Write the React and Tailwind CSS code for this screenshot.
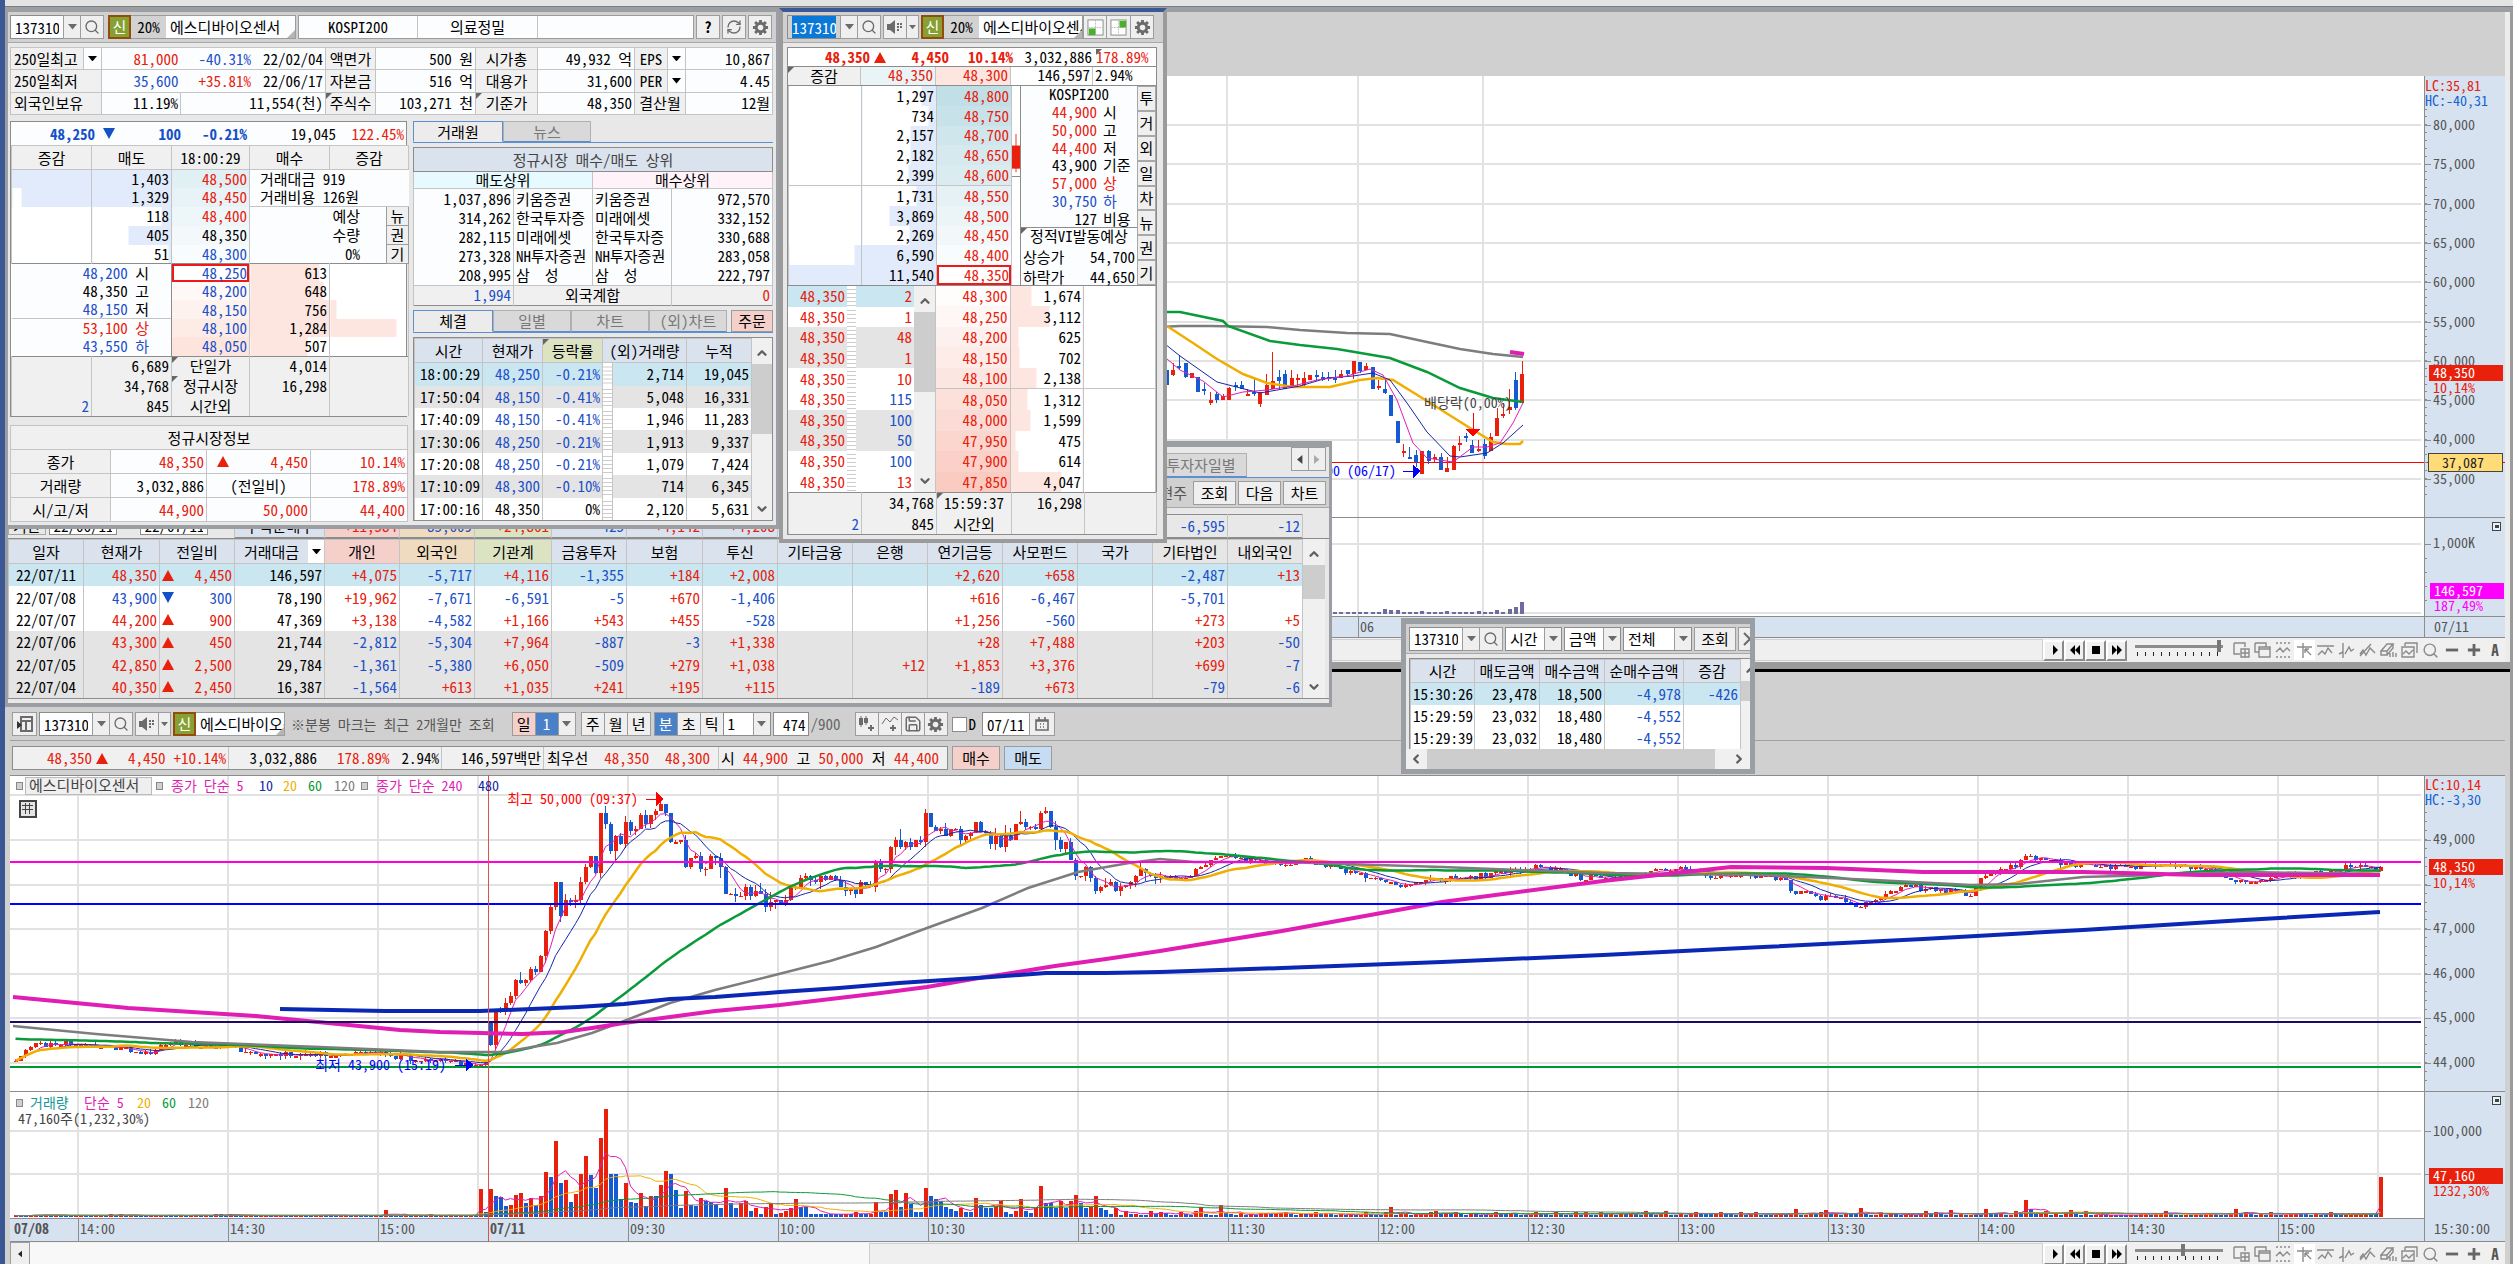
import { ChevronDown, ChevronLeft, ChevronRight, ChevronUp, RefreshCw, Save, Search, Settings, Volume1 } from "lucide-react";
import clsx from "clsx";

const RED = "#e8200c";
const BLUE = "#1450c8";

// signed numbers: + is red, - is blue
function tone(value) {
  if (String(value).startsWith("+")) return "text-[#e8200c]";
  if (String(value).startsWith("-")) return "text-[#1c50c8]";
  return "text-black";
}

const toneOf = { r: "text-[#e8200c]", b: "text-[#1c50c8]", k: "text-black" };

function barLeft(px, color) {
  return { backgroundImage: `linear-gradient(to right, ${color} ${px}px, transparent ${px}px)` };
}

function barRight(px, color) {
  return { backgroundImage: `linear-gradient(to left, ${color} ${px}px, transparent ${px}px)` };
}

/* ---------- small controls ---------- */

function IconButton({ label, className, children }) {
  return (
    <button
      aria-label={label}
      className={clsx("flex h-6 shrink-0 items-center justify-center border border-[#9c9c9c] bg-[#efefef] text-[#6b6b6b]", className)}
    >
      {children}
    </button>
  );
}

function Caret({ small }) {
  return (
    <svg viewBox="0 0 10 6" className={small ? "w-[7px]" : "w-[9px]"}>
      <path d="M0 0H10L5 6Z" fill="currentColor" />
    </svg>
  );
}

function Arrow({ up, className }) {
  return (
    <svg viewBox="0 0 12 11" className={clsx("inline-block w-3", className)}>
      <path d={up ? "M6 0L12 11H0Z" : "M0 0H12L6 11Z"} fill={up ? RED : BLUE} />
    </svg>
  );
}

function Corner() {
  return <span className="absolute left-0 top-0 border-r-[6px] border-t-[6px] border-r-transparent border-t-[#666]" />;
}

function CodeBox({ selected }) {
  return (
    <div className="flex shrink-0">
      <input
        aria-label="종목코드"
        defaultValue="137310"
        className={clsx(
          "h-6 w-[54px] border border-[#8c8c8c] px-1",
          selected ? "bg-[#0a78d7] bg-clip-content text-white" : "bg-[#fcfdff]"
        )}
      />
      <IconButton label="종목 목록" className="-ml-px w-[18px]">
        <Caret />
      </IconButton>
      <IconButton label="종목 검색" className="-ml-px w-6">
        <Search size={16} />
      </IconButton>
    </div>
  );
}

function Speaker() {
  return (
    <div className="flex shrink-0">
      <IconButton label="음성" className="w-6">
        <svg viewBox="0 0 18 16" className="w-[18px]">
          <path d="M1 5H4L9 1V15L4 11H1Z" fill="currentColor" />
          <path d="M11 5H13M14 5H16M11 8H13M14 8H16M11 11H13" stroke="currentColor" strokeWidth="2" />
        </svg>
      </IconButton>
      <IconButton label="음성 설정" className="-ml-px w-[13px]">
        <Caret small />
      </IconButton>
    </div>
  );
}

function Gear() {
  return (
    <svg viewBox="0 0 18 18" className="w-[17px]">
      <circle cx="9" cy="9" r="4.500" fill="none" stroke="currentColor" strokeWidth="3" />
      <path
        d="M9 1V4M9 14V17M1 9H4M14 9H17M3.300 3.300L5.400 5.400M12.600 12.600L14.700 14.700M14.700 3.300L12.600 5.400M5.400 12.600L3.300 14.700"
        stroke="currentColor"
        strokeWidth="3"
      />
    </svg>
  );
}

function CreditMark() {
  return (
    <span className="flex h-6 w-[23px] shrink-0 items-center justify-center border-2 border-[#964a0e] bg-[#86a032] text-white">신</span>
  );
}

function StockName({ rate, className }) {
  return (
    <div className="flex shrink-0 border-y border-r border-[#9c9c9c] bg-[#fcfdff]">
      {rate && <span className="flex w-[35px] shrink-0 items-center justify-center bg-[#d2d2d2]">{rate}</span>}
      <span className={clsx("relative flex items-center overflow-hidden whitespace-nowrap pl-1", className)}>
        에스디바이오센서
        <span className="absolute bottom-0 right-0 border-b-8 border-l-8 border-b-[#b5b5b5] border-l-transparent" />
      </span>
    </div>
  );
}

function Combo({ label, value, className }) {
  return (
    <span className={clsx("relative flex h-6 shrink-0 border border-[#8c8c8c] bg-white", className)}>
      <select aria-label={label} className="w-full appearance-none pl-1">
        <option>{value}</option>
      </select>
      <span className="pointer-events-none absolute inset-y-0 right-0 flex w-[17px] items-center justify-center border-l border-[#9c9c9c] bg-[#efefef] text-[#6b6b6b]">
        <Caret />
      </span>
    </span>
  );
}

function VScroll({ thumb, className }) {
  return (
    <div className={clsx("flex flex-col items-center justify-between bg-[#f0f0f0] py-1 text-[#606060]", className)}>
      <ChevronUp size={14} strokeWidth={4} className="my-1 shrink-0" />
      <div className={clsx("w-full bg-[#cdcdcd]", thumb)} />
      <div className="flex-1" />
      <ChevronDown size={14} strokeWidth={4} className="shrink-0" />
    </div>
  );
}

function Tab({ active, className, children }) {
  return (
    <button
      className={clsx(
        "flex items-center justify-center border",
        active
          ? "border-[#5b8fd0] border-b-transparent bg-[#ececec] text-black"
          : "border-[#b0b0b0] border-b-[#5b8fd0] bg-[#d9d9d9] text-[#787878]",
        className
      )}
    >
      {children}
    </button>
  );
}

function Cols({ widths }) {
  return (
    <colgroup>
      {widths.map((w, i) => (
        <col key={i} className={w} />
      ))}
    </colgroup>
  );
}

/* ---------- window 1: after-hours quote ---------- */

const th = "relative border border-[#c4c4c4] bg-[#f0f0f0] px-[3px] font-normal";
const td = "relative border border-[#c4c4c4] bg-[#fcfdff] px-[2px] text-right";
const v = "relative border-x border-[#c4c4c4] px-[2px]";

function StockInfo() {
  return (
    <table className="h-[68px] w-full table-fixed border-collapse border border-[#8c8c8c]">
      <Cols
        widths={["w-[73px]", "w-[18px]", "w-[79px]", "w-[145px]", "w-[50px]", "w-[100px]", "w-[62px]", "w-[97px]", "w-[33px]", "w-[18px]", "w-[87px]"]}
      />
      <tbody>
        <tr>
          <th className={clsx(th, "whitespace-nowrap text-left")}>250일최고</th>
          <td className={td}>
            <span className="flex justify-center"><Caret /></span>
          </td>
          <td className={clsx(td, "border-r-0 text-[#e8200c]")}>81,000</td>
          <td className={clsx(td, "border-l-0")}>
            <span className="mr-3 text-[#1c50c8]">-40.31%</span>22/02/04
          </td>
          <th className={th}>액면가</th>
          <td className={td}>500 원</td>
          <th className={th}>시가총</th>
          <td className={td}>49,932 억</td>
          <th className={th}>EPS</th>
          <td className={td}>
            <span className="flex justify-center"><Caret /></span>
          </td>
          <td className={td}>10,867</td>
        </tr>
        <tr>
          <th colSpan={2} className={clsx(th, "text-left")}>250일최저</th>
          <td className={clsx(td, "border-r-0 text-[#1c50c8]")}>35,600</td>
          <td className={clsx(td, "border-l-0")}>
            <span className="mr-3 text-[#e8200c]">+35.81%</span>22/06/17
          </td>
          <th className={th}>자본금</th>
          <td className={td}>516 억</td>
          <th className={th}>대용가</th>
          <td className={td}>31,600</td>
          <th className={th}>PER</th>
          <td className={td}>
            <span className="flex justify-center"><Caret /></span>
          </td>
          <td className={td}>4.45</td>
        </tr>
        <tr>
          <th colSpan={2} className={clsx(th, "text-left")}>외국인보유</th>
          <td className={td}>11.19%</td>
          <td className={td}>11,554(천)</td>
          <th className={th}><Corner />주식수</th>
          <td className={td}>103,271 천</td>
          <th className={th}><Corner />기준가</th>
          <td className={td}>48,350</td>
          <th colSpan={2} className={th}>결산월</th>
          <td className={td}>12월</td>
        </tr>
      </tbody>
    </table>
  );
}

const asks = [
  { qty: "1,403", price: "48,500", t: "r", bar: 159 },
  { qty: "1,329", price: "48,450", t: "r", bar: 150 },
  { qty: "118", price: "48,400", t: "r", bar: 10 },
  { qty: "405", price: "48,350", t: "k", bar: 43 },
  { qty: "51", price: "48,300", t: "b", bar: 3 },
];

const bids = [
  { ref: "48,200", mark: "시", rt: "b", price: "48,250", qty: "613", bar: 69 },
  { ref: "48,350", mark: "고", rt: "k", price: "48,200", qty: "648", bar: 73 },
  { ref: "48,150", mark: "저", rt: "b", price: "48,150", qty: "756", bar: 85 },
  { ref: "53,100", mark: "상", rt: "r", price: "48,100", qty: "1,284", bar: 145 },
  { ref: "43,550", mark: "하", rt: "b", price: "48,050", qty: "507", bar: 57 },
];

function AfterHoursQuote() {
  return (
    <div className="border border-[#8c8c8c] bg-white">
      <div className="flex h-[23px] items-center bg-[#fcfdff]">
        <b className="w-[84px] text-right text-[#1450c8]">48,250</b>
        <Arrow className="ml-2" />
        <b className="w-[66px] text-right text-[#1450c8]">100</b>
        <b className="w-[66px] text-right text-[#1450c8]">-0.21%</b>
        <span className="flex-1 text-right">19,045</span>
        <span className="w-[70px] pr-[2px] text-right text-[#e8200c]">122.45%</span>
      </div>
      <table className="h-[271px] w-full table-fixed border-collapse">
        <Cols widths={["w-[80px]", "w-[80px]", "w-[78px]", "w-[80px]", "w-[57px]", "w-[22px]"]} />
        <thead>
          <tr className="h-6 border-y border-[#8c8c8c]">
            <th className={th}>증감</th>
            <th className={th}>매도</th>
            <th className={th}>18:00:29</th>
            <th className={th}>매수</th>
            <th colSpan={2} className={th}>증감</th>
          </tr>
        </thead>
        <tbody>
          {asks.map((row, i) => (
            <tr key={row.price} className="text-right">
              <td className={v} style={barRight(Math.max(0, row.bar - 80), "#e2ebfb")} />
              <td className={v} style={barRight(row.bar, "#e2ebfb")}>{row.qty}</td>
              <td className={clsx(v, toneOf[row.t])} style={{ backgroundColor: `rgba(205,230,236,${0.6 - i * 0.12})` }}>{row.price}</td>
              {i < 2 && (
                <td colSpan={3} className={clsx("border-l border-[#8c8c8c] bg-[#fcfdff] pl-[10px] text-left", i === 1 && "border-b border-b-[#c4c4c4]")}>
                  {i === 0 ? "거래대금 919" : "거래비용 126원"}
                </td>
              )}
              {i >= 2 && (
                <>
                  <td colSpan={2} className="border-l border-[#8c8c8c] bg-[#fcfdff] pr-[26px]">{["예상", "수량", "0%"][i - 2]}</td>
                  <td className="border border-[#9c9c9c] bg-[#efefef] text-center">
                    <button>{["뉴", "권", "기"][i - 2]}</button>
                  </td>
                </>
              )}
            </tr>
          ))}
          {bids.map((row, i) => (
            <tr key={row.price} className={clsx("text-right", i === 0 && "border-t border-[#8c8c8c]")}>
              <td
                colSpan={2}
                className={clsx("relative border-r border-[#8c8c8c] bg-[#fcfdff] pr-[22px]", toneOf[row.rt], i === 3 && "border-t border-t-[#c4c4c4]")}
              >
                {row.ref} <span className={i < 3 ? "text-black" : ""}>{row.mark}</span>
              </td>
              <td
                className={clsx(v, "text-[#1c50c8]", i === 0 && "ring-2 ring-inset ring-[#f01818]")}
                style={{ backgroundColor: `rgba(252,222,212,${i * 0.2})` }}
              >
                {row.price}
              </td>
              <td className={v} style={barLeft(row.bar, "#fde6e0")}>{row.qty}</td>
              <td colSpan={2} className={v} style={barLeft(Math.max(0, row.bar - 79), "#fde6e0")} />
            </tr>
          ))}
          {[
            ["", "6,689", "단일가", "4,014"],
            ["", "34,768", "정규시장", "16,298"],
            ["2", "845", "시간외", ""],
          ].map((row, i) => (
            <tr key={row[2]} className={clsx("h-5 bg-[#f0f0f0] text-right", i === 0 && "border-t border-[#8c8c8c]")}>
              <td className={clsx(v, "text-[#1c50c8]")}>{row[0]}</td>
              <td className={v}>{row[1]}</td>
              <td className={clsx(v, "text-center")}>
                {i < 2 && <Corner />}
                {row[2]}
              </td>
              <td className={v}>{row[3]}</td>
              <td colSpan={2} className={v} />
            </tr>
          ))}
        </tbody>
      </table>
    </div>
  );
}

function RegularMarket() {
  return (
    <table className="h-[96px] w-full table-fixed border-collapse border border-[#8c8c8c]">
      <Cols widths={["w-[100px]", "w-[96px]", "w-[104px]", "w-[97px]"]} />
      <thead>
        <tr className="h-6">
          <th colSpan={4} className={th}>정규시장정보</th>
        </tr>
      </thead>
      <tbody className="text-[#e8200c]">
        <tr className="h-6">
          <th className={clsx(th, "text-black")}>종가</th>
          <td className={td}>48,350</td>
          <td className={td}>
            <span className="flex items-center justify-between pl-2"><Arrow up />4,450</span>
          </td>
          <td className={td}>10.14%</td>
        </tr>
        <tr className="h-6">
          <th className={clsx(th, "text-black")}>거래량</th>
          <td className={clsx(td, "text-black")}>3,032,886</td>
          <td className="border border-[#c4c4c4] bg-[#fcfdff] text-center text-black">(전일비)</td>
          <td className={td}>178.89%</td>
        </tr>
        <tr className="h-6">
          <th className={clsx(th, "text-black")}>시/고/저</th>
          <td className={td}>44,900</td>
          <td className={td}>50,000</td>
          <td className={td}>44,400</td>
        </tr>
      </tbody>
    </table>
  );
}

const brokers = [
  ["1,037,896", "키움증권", "키움증권", "972,570"],
  ["314,262", "한국투자증", "미래에셋", "332,152"],
  ["282,115", "미래에셋", "한국투자증", "330,688"],
  ["273,328", "NH투자증권", "NH투자증권", "283,058"],
  ["208,995", "삼  성", "삼  성", "222,797"],
];

function Brokers() {
  return (
    <table className="h-[159px] w-full table-fixed border-collapse border border-[#8c8c8c] bg-[#fcfdff]">
      <Cols widths={["w-[100px]", "w-[79px]", "w-[79px]", "w-[101px]"]} />
      <thead>
        <tr className="h-6">
          <th colSpan={4} className="border-b border-[#8c8c8c] bg-[#dae2ed] font-normal text-[#444]">정규시장 매수/매도 상위</th>
        </tr>
        <tr>
          <th colSpan={2} className="border border-[#c4c4c4] bg-[#e6faff] font-normal">매도상위</th>
          <th colSpan={2} className="border border-[#c4c4c4] bg-[#fff3f9] font-normal">매수상위</th>
        </tr>
      </thead>
      <tbody>
        {brokers.map((row) => (
          <tr key={row[0]}>
            <td className={clsx(v, "text-right")}>{row[0]}</td>
            <td className={clsx(v, "overflow-hidden whitespace-pre")}>{row[1]}</td>
            <td className={clsx(v, "overflow-hidden whitespace-pre")}>{row[2]}</td>
            <td className={clsx(v, "text-right")}>{row[3]}</td>
          </tr>
        ))}
        <tr className="border-t border-[#c4c4c4] bg-[#f0f0f0]">
          <td className={clsx(v, "text-right text-[#1c50c8]")}>1,994</td>
          <td colSpan={2} className={clsx(v, "text-center")}>외국계합</td>
          <td className={clsx(v, "text-right text-[#e8200c]")}>0</td>
        </tr>
      </tbody>
    </table>
  );
}

const trades = [
  ["18:00:29", "48,250", "-0.21%", "2,714", "19,045"],
  ["17:50:04", "48,150", "-0.41%", "5,048", "16,331"],
  ["17:40:09", "48,150", "-0.41%", "1,946", "11,283"],
  ["17:30:06", "48,250", "-0.21%", "1,913", "9,337"],
  ["17:20:08", "48,250", "-0.21%", "1,079", "7,424"],
  ["17:10:09", "48,300", "-0.10%", "714", "6,345"],
  ["17:00:16", "48,350", "0%", "2,120", "5,631"],
];

const rail = "bg-[repeating-linear-gradient(#fff_0_3px,#ccc_3px_4px)]";

function Trades() {
  return (
    <div className="flex border border-[#8c8c8c]">
      <table className="h-[182px] flex-1 table-fixed border-collapse bg-white">
        <Cols widths={["w-[68px]", "w-[60px]", "w-[60px]", "w-[10px]", "w-[74px]", "w-[65px]"]} />
        <thead>
          <tr className="h-6 bg-[#dae2ed]">
            <th className="border border-[#c4c4c4] font-normal">시간</th>
            <th className="border border-[#c4c4c4] font-normal">현재가</th>
            <th className="relative border border-[#c4c4c4] bg-[#dbe3c2] font-normal"><Corner />등락률</th>
            <th colSpan={2} className="whitespace-nowrap border border-[#c4c4c4] font-normal">(외)거래량</th>
            <th className="border border-[#c4c4c4] font-normal">누적</th>
          </tr>
        </thead>
        <tbody>
          {trades.map((row, i) => {
            const t = row[2].startsWith("-") ? "text-[#1c50c8]" : "";
            return (
              <tr key={row[0]} className={clsx("text-right", i === 0 ? "bg-[#c9e6f1]" : i % 2 ? "bg-[#e4e4e4]" : "bg-white")}>
                <td className={v}>{row[0]}</td>
                <td className={clsx(v, t)}>{row[1]}</td>
                <td className={clsx(v, t)}>{row[2]}</td>
                <td className={rail} />
                <td className={v}>{row[3]}</td>
                <td className={v}>{row[4]}</td>
              </tr>
            );
          })}
        </tbody>
      </table>
      <VScroll thumb="h-[70px]" className="w-5" />
    </div>
  );
}

function AfterHoursWindow() {
  return (
    <section className="absolute left-[5px] top-[7px] w-[774px] border-x-[3px] border-b-4 border-t-[5px] border-[#9b9fa3] bg-[#e8e8e8]">
      <div className="flex h-[31px] items-center border-b border-[#a8a8a8] bg-[#d0d0d0] pl-[2px] pr-1">
        <CodeBox />
        <div className="ml-1 flex h-6">
          <CreditMark />
          <StockName rate="20%" className="w-[129px]" />
        </div>
        <div className="ml-[2px] flex h-6 flex-1 border border-[#9c9c9c] bg-[#fcfdff]">
          <span className="flex w-[119px] items-center justify-center border-r border-[#c4c4c4]">KOSPI200</span>
          <span className="flex w-[120px] items-center justify-center border-r border-[#c4c4c4]">의료정밀</span>
        </div>
        <IconButton label="도움말" className="ml-[2px] w-6"><b className="text-black">?</b></IconButton>
        <IconButton label="새로고침" className="ml-[2px] w-6"><RefreshCw size={16} /></IconButton>
        <IconButton label="설정" className="ml-[2px] w-6"><Gear /></IconButton>
      </div>
      <div className="flex flex-col gap-[6px] pb-[3px] pl-[2px] pr-1 pt-1">
        <StockInfo />
        <div className="flex gap-[6px]">
          <div className="flex w-[397px] flex-col gap-2">
            <AfterHoursQuote />
            <RegularMarket />
          </div>
          <div className="flex flex-1 flex-col gap-1">
            <div className="flex h-[22px] border-b border-[#5b8fd0]">
              <Tab active className="w-[90px]">거래원</Tab>
              <Tab className="w-[88px]">뉴스</Tab>
            </div>
            <Brokers />
            <div className="flex h-[23px] border-b border-[#5b8fd0]">
              <Tab active className="w-20">체결</Tab>
              <Tab className="w-[78px]">일별</Tab>
              <Tab className="w-[78px]">차트</Tab>
              <Tab className="w-[78px]">(외)차트</Tab>
              <button className="ml-1 flex-1 border border-[#9c9c9c] bg-[#f5cfca]">주문</button>
            </div>
            <Trades />
          </div>
        </div>
      </div>
    </section>
  );
}

/* ---------- window 2: order book ---------- */

const bookAsks = [
  ["1,297", "48,800", 15],
  ["734", "48,750", 8],
  ["2,157", "48,700", 26],
  ["2,182", "48,650", 26],
  ["2,399", "48,600", 28],
  ["1,731", "48,550", 20],
  ["3,869", "48,500", 47],
  ["2,269", "48,450", 27],
  ["6,590", "48,400", 82],
  ["11,540", "48,350", 148],
];

const bookBids = [
  ["48,300", "1,674", 21],
  ["48,250", "3,112", 39],
  ["48,200", "625", 8],
  ["48,150", "702", 9],
  ["48,100", "2,138", 26],
  ["48,050", "1,312", 17],
  ["48,000", "1,599", 20],
  ["47,950", "475", 5],
  ["47,900", "614", 8],
  ["47,850", "4,047", 51],
];

const ticks = [
  ["2", "r"],
  ["1", "r"],
  ["48", "r"],
  ["1", "r"],
  ["10", "r"],
  ["115", "b"],
  ["100", "b"],
  ["50", "b"],
  ["100", "b"],
  ["13", "r"],
];

const levels = [
  ["44,900", "시", "r"],
  ["50,000", "고", "r"],
  ["44,400", "저", "r"],
  ["43,900", "기준", "k"],
  ["57,000", "상", "r"],
  ["30,750", "하", "b"],
  ["127", "비용", "k"],
];

function QuadIcon({ x, y }) {
  return (
    <svg viewBox="0 0 18 18" className="w-[17px]">
      <rect x="1" y="1" width="16" height="16" fill="#fff" stroke="#8a8a8a" />
      <path d="M9 1V17M1 9H17" stroke="#bbb" strokeDasharray="2 1" />
      <rect x={x} y={y} width="7" height="7" fill="#4caf2c" />
    </svg>
  );
}

function OrderBookWindow() {
  return (
    <section className="absolute left-[779px] top-[8px] w-[388px] border-4 border-[#9b9b9b] border-t-[#3b5794] bg-[#e8e8e8]">
      <div className="flex h-[31px] items-center border-b border-[#a8a8a8] bg-[#d0d0d0] px-1">
        <CodeBox selected />
        <div className="ml-[2px]"><Speaker /></div>
        <div className="ml-[2px] flex h-6">
          <CreditMark />
          <StockName rate="20%" className="w-[103px]" />
        </div>
        <div className="flex flex-1">
          <IconButton label="왼쪽 배치" className="w-6"><QuadIcon x={2} y={10} /></IconButton>
          <IconButton label="오른쪽 배치" className="-ml-px w-[25px]"><QuadIcon x={10} y={2} /></IconButton>
          <IconButton label="설정" className="-ml-px w-6"><Gear /></IconButton>
        </div>
      </div>
      <div className="px-1 pb-1 pt-1">
        <div className="w-[370px] border border-[#8c8c8c] bg-white">
          <div className="flex h-[18px] items-center">
            <b className="w-[82px] text-right text-[#e8200c]">48,350</b>
            <Arrow up className="ml-1" />
            <b className="w-[63px] text-right text-[#e8200c]">4,450</b>
            <b className="w-16 text-right text-[#e8200c]">10.14%</b>
            <span className="flex-1 text-right">3,032,886</span>
            <span className="relative ml-1 w-[60px] text-[#e8200c]"><Corner />178.89%</span>
          </div>
          <div className="flex h-5 border-y border-[#8c8c8c]">
            <span className="relative flex w-[73px] items-center justify-center border-r border-[#c4c4c4] bg-[#f0f0f0]"><Corner />증감</span>
            <span className="w-[75px] border-r border-[#c4c4c4] bg-[#e8f4f6] pr-[2px] text-right text-[#e8200c]">48,350</span>
            <span className="w-[75px] border-r border-[#c4c4c4] bg-[#fde6e0] pr-[2px] text-right text-[#e8200c]">48,300</span>
            <span className="flex-1 border-r border-[#c4c4c4] pr-[2px] text-right">146,597</span>
            <span className="w-[63px] pl-[2px]">2.94%</span>
          </div>
          <div className="flex h-[200px] border-b border-[#8c8c8c]">
            <table className="h-full w-[223px] table-fixed border-collapse text-right">
              <Cols widths={["w-[73px]", "w-[75px]", "w-[75px]"]} />
              <tbody>
                {bookAsks.map(([qty, price, bar], i) => (
                  <tr key={price} className={i === 5 ? "border-t border-[#c4c4c4]" : ""}>
                    <td className={v} style={barRight(Math.max(0, bar - 75), "#e2ebfb")} />
                    <td className={v} style={barRight(bar, "#e2ebfb")}>{qty}</td>
                    <td
                      className={clsx(v, "text-[#e8200c]", i === 9 && "ring-2 ring-inset ring-[#f01818]")}
                      style={{ backgroundColor: `rgba(190,221,230,${i < 5 ? 0.95 - i * 0.1 : (9 - i) * 0.1})` }}
                    >
                      {price}
                    </td>
                  </tr>
                ))}
              </tbody>
            </table>
            <div className="w-[9px] shrink-0 border-r border-[#8c8c8c]">
              <svg viewBox="0 0 9 101" className="block w-full border-b border-[#8c8c8c]">
                <path d="M4.5 54V97" stroke={RED} />
                <rect y="67" width="9" height="26" fill={RED} />
              </svg>
            </div>
            <div className="flex flex-1 flex-col bg-[#fcfdff]">
              <div className="flex flex-1 flex-col justify-between">
                <span className="text-center">KOSPI200</span>
                {levels.map(([price, name, t]) => (
                  <span key={name} className="flex">
                    <span className={clsx("w-[76px] text-right", toneOf[t])}>{price}</span>
                    <span className={clsx("whitespace-nowrap pl-[6px]", name === "상" ? toneOf.r : name === "하" ? toneOf.b : "")}>{name}</span>
                  </span>
                ))}
              </div>
              <div className="relative flex h-[58px] flex-col justify-between border-t border-[#8c8c8c]">
                <Corner />
                <span className="whitespace-nowrap text-center">정적VI발동예상</span>
                <span className="flex justify-between px-[2px]"><span>상승가</span>54,700</span>
                <span className="flex justify-between px-[2px]"><span>하락가</span>44,650</span>
              </div>
            </div>
            <div className="flex w-[19px] shrink-0 flex-col">
              {["투", "거", "외", "일", "차", "뉴", "권", "기"].map((name) => (
                <button key={name} className="flex-1 border border-[#a8a8a8] bg-[#efefef]">{name}</button>
              ))}
            </div>
          </div>
          <div className="flex h-[206px]">
            <table className="h-full w-[126px] table-fixed border-collapse text-right">
              <Cols widths={["w-[59px]", "w-[9px]", "w-[58px]"]} />
              <tbody>
                {ticks.map(([qty, t], i) => (
                  <tr key={i} className={i === 0 ? "bg-[#c9e6f1]" : [2, 3, 6, 7].includes(i) ? "bg-[#e4e4e4]" : ""}>
                    <td className="px-[2px] text-[#e8200c]">48,350</td>
                    <td className={rail} />
                    <td className={clsx("px-[2px]", toneOf[t])}>{qty}</td>
                  </tr>
                ))}
              </tbody>
            </table>
            <VScroll thumb="h-20" className="w-[21px]" />
            <table className="h-full flex-1 table-fixed border-collapse border-l border-[#8c8c8c] text-right">
              <Cols widths={["w-[75px]", "w-[74px]", "w-[73px]"]} />
              <tbody>
                {bookBids.map(([price, qty, bar], i) => (
                  <tr key={price} className={i === 5 ? "border-t border-[#c4c4c4]" : ""}>
                    <td className={clsx(v, "text-[#e8200c]")} style={{ backgroundColor: `rgba(249,200,190,${0.05 + i * 0.1})` }}>{price}</td>
                    <td className={v} style={barLeft(bar, "#fde6e0")}>{qty}</td>
                    <td className={v} />
                  </tr>
                ))}
              </tbody>
            </table>
          </div>
          <table className="h-[42px] w-full table-fixed border-collapse border-t border-[#8c8c8c] bg-[#f0f0f0] text-right">
            <Cols widths={["w-[73px]", "w-[75px]", "w-[75px]", "w-[73px]", "w-[72px]"]} />
            <tbody>
              <tr>
                <td className={v} />
                <td className={v}>34,768</td>
                <td className={clsx(v, "text-center")}><Corner />15:59:37</td>
                <td className={v}>16,298</td>
                <td className={v} />
              </tr>
              <tr>
                <td className={clsx(v, "text-[#1c50c8]")}>2</td>
                <td className={v}>845</td>
                <td className={clsx(v, "text-center")}>시간외</td>
                <td className={v} />
                <td className={v} />
              </tr>
            </tbody>
          </table>
        </div>
      </div>
    </section>
  );
}

/* ---------- window 3: investors by day ---------- */

const investorHead = [
  "일자", "현재가", "전일비", "거래대금", "개인", "외국인", "기관계", "금융투자", "보험", "투신",
  "기타금융", "은행", "연기금등", "사모펀드", "국가", "기타법인", "내외국인",
];

const investorRows = [
  ["22/07/11", "48,350", "4,450", "146,597", "+4,075", "-5,717", "+4,116", "-1,355", "+184", "+2,008", "", "", "+2,620", "+658", "", "-2,487", "+13"],
  ["22/07/08", "43,900", "300", "78,190", "+19,962", "-7,671", "-6,591", "-5", "+670", "-1,406", "", "", "+616", "-6,467", "", "-5,701", ""],
  ["22/07/07", "44,200", "900", "47,369", "+3,138", "-4,582", "+1,166", "+543", "+455", "-528", "", "", "+1,256", "-560", "", "+273", "+5"],
  ["22/07/06", "43,300", "450", "21,744", "-2,812", "-5,304", "+7,964", "-887", "-3", "+1,338", "", "", "+28", "+7,488", "", "+203", "-50"],
  ["22/07/05", "42,850", "2,500", "29,784", "-1,361", "-5,380", "+6,050", "-509", "+279", "+1,038", "", "+12", "+1,853", "+3,376", "", "+699", "-7"],
  ["22/07/04", "40,350", "2,450", "16,387", "-1,564", "+613", "+1,035", "+241", "+195", "+115", "", "", "-189", "+673", "", "-79", "-6"],
];

const investorCols = [
  "w-[75px]", "w-[76px]", "w-[75px]", "w-[90px]", "w-[75px]", "w-[75px]", "w-[77px]", "w-[75px]", "w-[76px]", "w-[75px]",
  "w-[75px]", "w-[75px]", "w-[75px]", "w-[75px]", "w-[75px]", "w-[75px]", "w-[75px]",
];

const headTint = { 개인: "bg-[#f5cfca]", 외국인: "bg-[#efdcc0]", 기관계: "bg-[#dbe3c2]", 기타법인: "bg-[#e6e6e6]", 내외국인: "bg-[#e6e6e6]" };

function InvestorWindow() {
  return (
    <section className="absolute left-[5px] top-[441px] w-[1327px] border-x-[3px] border-b-4 border-t-[6px] border-[#9b9fa3] bg-[#e8e8e8] pb-1">
      <div className="flex h-[31px] items-end justify-end border-b border-[#5b8fd0] pr-[3px]">
        <Tab className="h-6 w-[92px]">투자자일별</Tab>
        <div className="mb-[6px] ml-11 flex">
          <IconButton label="이전 탭" className="w-[18px]"><svg viewBox="0 0 6 10" className="h-[9px]"><path d="M6 0V10L0 5Z" fill="#444" /></svg></IconButton>
          <IconButton label="다음 탭" className="-ml-px w-[18px]"><svg viewBox="0 0 6 10" className="h-[9px]"><path d="M0 0V10L6 5Z" fill="#aaa" /></svg></IconButton>
        </div>
      </div>
      <div className="flex h-[30px] items-center justify-end gap-[2px] border-b border-[#a8a8a8] bg-[#d0d0d0] pr-[3px]">
        <span className="mr-1 text-[#555]">현주</span>
        {["조회", "다음", "차트"].map((name) => (
          <IconButton key={name} className="w-[43px]"><span className="text-black">{name}</span></IconButton>
        ))}
      </div>
      <div className="mt-[6px] flex">
        <div className="flex h-6 w-[226px] items-center gap-[3px]">
          <span className="border border-[#a8a8a8] px-1">기간</span>
          <input aria-label="시작일" defaultValue="22/06/11" className="w-[68px] border border-[#8c8c8c] bg-white px-1" />
          <input aria-label="종료일" defaultValue="22/07/11" className="ml-5 w-[68px] border border-[#8c8c8c] bg-white px-1" />
        </div>
        <table className="h-6 w-[1068px] table-fixed border-collapse border border-[#8c8c8c] text-right">
          <Cols widths={investorCols.slice(3)} />
          <tbody>
            <tr>
              <th className={clsx(v, "bg-[#dae2ed] text-center font-normal")}>누적순매수</th>
              {["+11,584", "-85,609", "+24,861", "-425", "+4,142", "+4,208", "", "", "", "", "", "-6,595", "-12"].map((value, i) => (
                <td key={i} className={clsx(v, tone(value), ["bg-[#f5cfca]", "bg-[#efdcc0]", "bg-[#dbe3c2]"][i] || (i > 10 ? "" : "bg-[#dae2ed]"))}>{value}</td>
              ))}
            </tr>
          </tbody>
        </table>
      </div>
      <div className="flex border-y border-[#8c8c8c]">
        <table className="h-[159px] w-[1294px] table-fixed border-collapse">
          <Cols widths={investorCols} />
          <thead>
            <tr className="h-6">
              {investorHead.map((name, i) => (
                <th key={name} className={clsx("relative whitespace-nowrap border border-[#c4c4c4] font-normal", headTint[name] || "bg-[#dae2ed]", i === 3 && "pr-4")}>
                  {name}
                  {i === 3 && <span className="absolute inset-y-0 right-0 flex w-4 items-center justify-center bg-white"><Caret /></span>}
                </th>
              ))}
            </tr>
          </thead>
          <tbody>
            {investorRows.map((row, r) => {
              const down = r === 1;
              const t = down ? "text-[#1c50c8]" : "text-[#e8200c]";
              return (
                <tr key={row[0]} className={clsx("text-right", r === 0 ? "bg-[#c9e6f1]" : r < 3 ? "bg-white" : "bg-[#e4e4e4]")}>
                  <td className={clsx(v, "text-center")}>{row[0]}</td>
                  <td className={clsx(v, t)}>{row[1]}</td>
                  <td className={clsx(v, t)}>
                    <span className="flex items-center justify-between"><Arrow up={!down} />{row[2]}</span>
                  </td>
                  <td className={v}>{row[3]}</td>
                  {row.slice(4).map((value, i) => (
                    <td key={i} className={clsx(v, tone(value))}>{value}</td>
                  ))}
                </tr>
              );
            })}
          </tbody>
        </table>
        <VScroll thumb="h-[34px]" className="w-[22px]" />
      </div>
    </section>
  );
}

/* ---------- window 4: program trading ---------- */

const program = [
  ["15:30:26", "23,478", "18,500", "-4,978", "-426"],
  ["15:29:59", "23,032", "18,480", "-4,552", ""],
  ["15:29:39", "23,032", "18,480", "-4,552", ""],
];

function ProgramWindow() {
  return (
    <section className="absolute left-[1401px] top-[618px] w-[354px] overflow-hidden border-x-[5px] border-b-[5px] border-t-[6px] border-[#9b9fa3] bg-[#e8e8e8]">
      <div className="flex h-[30px] items-center gap-[2px] overflow-hidden border-b border-[#a8a8a8] bg-[#d0d0d0] pl-[3px]">
        <CodeBox />
        <Combo label="기준" value="시간" className="w-[57px]" />
        <Combo label="단위" value="금액" className="w-[57px]" />
        <Combo label="구분" value="전체" className="w-[69px]" />
        <IconButton className="w-[42px]"><span className="text-black">조회</span></IconButton>
        <IconButton label="닫기" className="w-6">
          <svg viewBox="0 0 14 14" className="w-[14px]"><path d="M1 1L13 13M13 1L1 13" stroke="currentColor" strokeWidth="2" /></svg>
        </IconButton>
      </div>
      <div className="ml-[3px] mt-1 flex overflow-hidden border-l border-t border-[#8c8c8c]">
        <table className="h-[90px] w-[330px] shrink-0 table-fixed border-collapse bg-white text-right">
          <Cols widths={["w-[64px]", "w-[65px]", "w-[65px]", "w-[79px]", "w-[57px]"]} />
          <thead>
            <tr className="h-[23px] bg-[#dae2ed] text-center">
              {["시간", "매도금액", "매수금액", "순매수금액", "증감"].map((name) => (
                <th key={name} className="whitespace-nowrap border border-[#c4c4c4] font-normal">{name}</th>
              ))}
            </tr>
          </thead>
          <tbody>
            {program.map((row, r) => (
              <tr key={row[0]} className={r === 0 ? "bg-[#c9e6f1]" : ""}>
                {row.map((value, i) => (
                  <td key={i} className={clsx(v, tone(value))}>{value}</td>
                ))}
              </tr>
            ))}
          </tbody>
        </table>
        <div className="flex w-5 shrink-0 flex-col items-center bg-[#f0f0f0] text-[#606060]">
          <ChevronUp size={14} strokeWidth={4} className="my-1" />
          <div className="h-5 w-full bg-[#cdcdcd]" />
        </div>
      </div>
      <div className="flex h-5 items-center bg-[#f0f0f0] pl-[3px] pr-1 text-[#606060]">
        <ChevronLeft size={14} strokeWidth={4} />
        <div className="ml-1 h-full w-[288px] bg-[#cdcdcd]" />
        <ChevronRight size={14} strokeWidth={4} className="ml-auto" />
      </div>
    </section>
  );
}

/* ---------- chart data ---------- */

function createRandom(seed) {
  let s = seed;
  return () => {
    s = (s * 1664525 + 1013904223) % 4294967296;
    return s / 4294967296;
  };
}

const random = createRandom(11);

// minute closes between two known points, with a little noise, in 50 won ticks
function walk(points) {
  const out = [];
  for (let k = 1; k < points.length; k++) {
    const [i0, p0] = points[k - 1];
    const [i1, p1] = points[k];
    for (let i = i0; i < i1; i++) {
      const p = p0 + ((p1 - p0) * (i - i0)) / (i1 - i0) + (random() - 0.5) * 130;
      out.push(Math.round(p / 50) * 50);
    }
  }
  return out;
}

const beforeOpen = walk([
  [0, 44100], [3, 44400], [10, 44450], [19, 44350], [26, 44250], [32, 44450], [42, 44350],
  [48, 44200], [61, 44200], [72, 44250], [80, 44100], [90, 44000], [95, 43950],
]);

const morning = [
  444, 452, 451.5, 453.5, 455, 458.5, 458, 458.5, 461, 460.5, 464, 469.5, 475, 480.5, 473, 476.5, 476, 476.5, 480.5, 484,
  486.5, 482.5, 496, 493.5, 487.5, 491, 489, 494, 492, 492.5, 495.5, 493.5, 495.5, 496.5, 498, 496, 489.5, 489.5, 490, 484,
  486, 486.5, 483.5, 483.5, 486.5, 486, 484, 478, 478, 477.5, 477.5, 479.5, 477.5, 478.5, 478, 475, 476, 476.5, 475.5, 476.5,
  479.5, 479.5, 481.5, 482, 481, 480.5, 482, 481, 482, 481, 479.5, 478.5, 479, 478, 480.5, 480, 479.5, 485, 483.5, 483.5,
  488.5, 490, 488.5, 489.5, 488.5, 490, 489.5, 496, 493, 492, 492.5, 491, 492.5, 492.5, 490, 491, 491.5, 494, 492, 491.5,
  489, 491, 488.5, 491, 490, 493.5, 494, 493, 493, 492.5, 496, 496.5, 493, 490, 488, 489.5, 485.5, 482, 482, 484,
  481.5, 478.5, 479.5, 480, 480.5, 478.5, 479.5, 480, 480.5, 482, 483.5, 482.5, 482,
].map((p) => p * 100);

const OPEN_AT = 95;

const closes = [
  ...beforeOpen,
  ...morning,
  ...walk([
    [OPEN_AT + morning.length, 48150], [234, 48140], [237, 48430], [241, 48650], [250, 48500], [258, 48540], [263, 48390],
    [269, 48250], [277, 47960], [285, 48140], [293, 48180], [300, 48320], [305, 48430], [313, 48180], [321, 48180], [330, 48360],
    [337, 48250], [345, 48180], [353, 48140], [356, 47820], [362, 47710], [369, 47520], [372, 47640], [378, 48000], [385, 47850],
    [391, 47780], [394, 48250], [399, 48390], [402, 48600], [410, 48460], [423, 48390], [436, 48430], [444, 48080], [455, 48180],
    [468, 48400], [474, 48350],
  ]),
];

const candles = closes.map((close, i) => {
  const open = i === OPEN_AT ? 44900 : i ? closes[i - 1] : close;
  const spread = i > OPEN_AT && i < 230 ? 260 : 90;
  return {
    open,
    close,
    high: Math.max(open, close) + random() * random() * spread,
    low: Math.min(open, close) - random() * random() * spread,
  };
});

const morningVolumes = [
  32, 6, 33, 24, 23, 13, 14, 26, 28, 16, 22, 14, 24, 52, 46, 88, 40, 43, 17, 27, 50, 71, 49, 34, 92, 126, 50, 50, 21, 40,
  18, 16, 28, 13, 24, 24, 37, 53, 50, 31, 10, 30, 14, 13, 22, 19, 17, 15, 11, 34, 16, 11, 16, 19, 7, 10, 4, 12, 16, 4,
  5, 7, 10, 21, 12, 12, 4, 4, 4, 3, 3, 3, 3, 4, 3, 6, 3, 3, 4, 18, 6, 6, 27, 31, 12, 28, 15, 6, 6, 34,
  24, 21, 19, 12, 9, 7, 10, 6, 6, 22, 14, 11, 10, 13, 19, 6, 4, 7, 21, 7, 5, 10, 36, 16, 16, 10, 19, 10, 19, 26,
  16, 11, 12, 24, 10, 8, 4, 10,
];

const volumeSpikes = { 74: 8, 237: 12, 241: 14, 275: 12, 356: 9, 362: 8, 369: 10, 394: 9, 402: 20, 403: 9, 444: 9, 473: 47 };

const volumes = closes.map((_, i) => {
  if (volumeSpikes[i]) return volumeSpikes[i];
  if (i < 93) return 1 + random() * 2;
  return morningVolumes[i - 93] ?? 2 + random() * random() * 6;
});

function average(list, n, prior) {
  return list.map((_, i) => {
    let sum = 0;
    let count = 0;
    for (let k = i - n + 1; k <= i; k++) {
      if (k < 0 && prior === undefined) continue;
      sum += k < 0 ? prior : list[k];
      count++;
    }
    return sum / count;
  });
}

const barX = (i) => 14 + i * 5;
const priceY = (p) => 840 + (49000 - p) * 0.0446;
const volumeY = (k) => 1217 - k * 0.86;

const line = (list, toY) => list.map((p, i) => `${barX(i) + 1.5},${toY(p).toFixed(1)}`).join(" ");

const MAGENTA = "#e01eb4";
const NAVY = "#1428a8";
const GOLD = "#f0ae00";
const GREEN = "#0a9a3a";
const GRAY = "#7d7d7d";

const times = ["14:00", "14:30", "15:00", "09:30", "10:00", "10:30", "11:00", "11:30", "12:00", "12:30", "13:00", "13:30", "14:00", "14:30", "15:00"];
const timeX = [78, 228, 378, 628, 778, 928, 1078, 1228, 1378, 1528, 1678, 1828, 1978, 2128, 2278];

function PriceTag({ x, y, fill, color, children }) {
  return (
    <>
      <rect x={x} y={y - 8} width="74" height="16" fill={fill} />
      <text x={x + 4} y={y + 5} fill={color}>{children}</text>
    </>
  );
}

function MinuteChart() {
  return (
    <svg viewBox="10 775 2495 467" className="block w-full bg-white text-[14px]" shapeRendering="crispEdges" role="img" aria-label="분봉 차트">
      <rect x="2424" y="775" width="81" height="467" fill="#d6e2f0" />
      <rect x="10" y="1219" width="2414" height="23" fill="#d6e2f0" />
      <g stroke="#e2e2e2" strokeWidth="1.5">
        {[795, 840, 885, 929, 974, 1018, 1063, 1131, 1174].map((y) => <path key={y} d={`M10 ${y}H2421`} />)}
        {[...timeX, 478, 2378].map((x) => <path key={x} d={`M${x} 775V1219`} />)}
      </g>
      <path d="M10 1091.5H2505M10 1218.5H2424M2424.5 775V1242M10 1241.5H2505M10 775.5H2505" stroke="#8c8c8c" />

      {/* volume bars are coloured against the previous minute's volume */}
      {volumes.map((k, i) => (
        <rect key={i} x={barX(i)} y={volumeY(k)} width="4" height={k * 0.86} fill={k > (volumes[i - 1] ?? 0) ? RED : "#145ad2"} />
      ))}
      <g fill="none" shapeRendering="auto">
        <polyline points={line(average(volumes, 5), volumeY)} stroke={MAGENTA} />
        <polyline points={line(average(volumes, 20), volumeY)} stroke={GOLD} />
        <polyline points={line(average(volumes, 60), volumeY)} stroke={GREEN} />
        <polyline points={line(average(volumes, 120), volumeY)} stroke={GRAY} />
      </g>

      {candles.map((c, i) => {
        const up = c.close >= c.open;
        const top = priceY(Math.max(c.open, c.close));
        const height = Math.max(1.5, Math.abs(c.open - c.close) * 0.0446);
        return (
          <g key={i} fill={up ? RED : "#145ad2"}>
            <rect x={barX(i) + 1} y={priceY(c.high)} width="1" height={(c.high - c.low) * 0.0446} />
            <rect x={barX(i)} y={top} width="4" height={height} />
          </g>
        );
      })}

      <g fill="none" shapeRendering="auto">
        <polyline points={line(average(closes, 5), priceY)} stroke={MAGENTA} />
        <polyline points={line(average(closes, 10), priceY)} stroke={NAVY} />
        <polyline points={line(average(closes, 20), priceY)} stroke={GOLD} strokeWidth="2.500" />
        <polyline points={line(average(closes, 60, 44550), priceY)} stroke={GREEN} strokeWidth="2.500" />
        <polyline
          stroke={GRAY}
          strokeWidth="2.500"
          points="13,1026 96,1034 192,1042 320,1047 440,1052 504,1052 532,1047 557,1043 592,1033 624,1021 670,1003 715,990 771,976 830,961 876,947 927,928 982,908 1028,888 1078,872 1129,863 1160,859 1194,862 1282,862 1442,867 1603,873 1763,875 1875,880 1971,885 2019,884 2083,877 2156,875 2244,872 2380,874"
        />
        <polyline
          stroke={MAGENTA}
          strokeWidth="4"
          points="13,997 128,1008 256,1016 400,1030 440,1032 481,1033 523,1034 564,1032 592,1028 624,1023 670,1017 715,1011 780,1005 839,998 881,993 927,987 973,979 1018,972 1055,966 1106,959 1160,951 1282,931 1442,902 1603,881 1731,867 1827,868 1923,872 2083,872 2200,875 2380,875"
        />
        <polyline
          stroke="#0a28b4"
          strokeWidth="4"
          points="280,1009 385,1011 480,1011 532,1009 578,1007 624,1004 670,999 715,997 780,992 839,988 899,983 945,980 991,977 1046,973 1106,973 1160,972 1282,968 1442,962 1603,955 1763,947 1923,939 2083,930 2244,920 2380,912"
        />
      </g>
      <g strokeWidth="2">
        <path d="M10 862H2421" stroke="#ff00dc" />
        <path d="M10 904H2421" stroke="#0000ff" />
        <path d="M10 1022H2421" stroke="#1c0a64" />
        <path d="M10 1067H2421" stroke="#009632" />
      </g>
      <path d="M488.5 775V1242" stroke="#dc5050" />

      <g fill="#d0d0d0" stroke="#888">
        <rect x="16.500" y="782.500" width="6" height="7" />
        <rect x="156.500" y="782.500" width="6" height="7" />
        <rect x="361.500" y="782.500" width="6" height="7" />
        <rect x="16.500" y="1099.500" width="6" height="7" />
        <rect x="25.500" y="777.500" width="126" height="17" fill="#efefef" stroke="#bbb" />
      </g>
      <text x="29" y="791" className="text-[15px]" fill="#444">에스디바이오센서</text>
      <text x="171" y="791" fill={MAGENTA}>종가 단순 5</text>
      <text x="259" y="791" fill={NAVY}>10</text>
      <text x="283" y="791" fill={GOLD}>20</text>
      <text x="308" y="791" fill={GREEN}>60</text>
      <text x="334" y="791" fill={GRAY}>120</text>
      <text x="376" y="791" fill={MAGENTA}>종가 단순 240</text>
      <text x="478" y="791" fill={NAVY}>480</text>
      <g fill="none" stroke="#444">
        <rect x="19.500" y="800.500" width="16" height="16" fill="#e4e4e4" strokeWidth="2" />
        <path d="M22 805.500H33M22 809.500H33M25.500 803V814M29.500 803V814" />
      </g>

      <text x="638" y="804" textAnchor="end" fill="#ff0000">최고 50,000 (09:37)</text>
      <path d="M646 799.500H658" stroke="#ff0000" />
      <path d="M656 792L664 799L656 806Z" fill="#ff0000" />
      <text x="446" y="1070" textAnchor="end" fill="#0000ff">최저 43,900 (15:19)</text>
      <path d="M455 1065.500H468" stroke="#0000ff" />
      <path d="M466 1059L474 1065L466 1071Z" fill="#0000ff" />

      <text x="30" y="1108" fill="#149696">거래량</text>
      <text x="84" y="1108" fill={MAGENTA}>단순 5</text>
      <text x="137" y="1108" fill={GOLD}>20</text>
      <text x="162" y="1108" fill={GREEN}>60</text>
      <text x="188" y="1108" fill={GRAY}>120</text>
      <text x="18" y="1124" fill="#444">47,160주(1,232,30%)</text>

      <g fill="#555">
        <text x="14" y="1234" className="font-bold">07/08</text>
        <text x="490" y="1234" className="font-bold">07/11</text>
        {timeX.map((x, i) => <text key={x} x={x + 2} y="1234">{times[i]}</text>)}
        <text x="2434" y="1234">15:30:00</text>
        {[49, 47, 46, 45, 44].map((p) => <text key={p} x="2433" y={priceY(p * 1000) + 4}>{p},000</text>)}
        <text x="2433" y="1136">100,000</text>
      </g>
      <g stroke="#8c8c8c">
        {timeX.map((x) => <path key={x} d={`M${x} 1219V1242`} />)}
        {[840, 885, 929, 974, 1018, 1063, 1131, 1174].map((y) => <path key={y} d={`M2424 ${y}H2431`} />)}
        {Array.from({ length: 32 }, (_, i) => <path key={i} d={`M2424 ${804 + i * 8.92}H2427`} />)}
      </g>
      <text x="2425" y="790" fill={RED}>LC:10,14</text>
      <text x="2425" y="805" fill="#1464d2">HC:-3,30</text>
      <PriceTag x={2429} y={867} fill={RED} color="#fff">48,350</PriceTag>
      <text x="2433" y="888" fill={RED}>10,14%</text>
      <PriceTag x={2429} y={1176} fill={RED} color="#fff">47,160</PriceTag>
      <text x="2433" y="1196" fill={RED}>1232,30%</text>
      <rect x="2492.500" y="1096.500" width="8" height="8" fill="#e8f0f8" stroke="#444" />
      <path d="M2495 1100.500H2499" stroke="#444" strokeWidth="3" />
    </svg>
  );
}

// daily bars in hundreds of won: high, open, close, low
const days = [
  [489, 488, 470, 469], [497, 482, 489, 481], [508, 494, 491, 489], [498, 497, 480, 478], [485, 478, 485, 478], [480, 480, 461, 461],
  [472, 465, 462, 457], [460, 447, 451, 444], [461, 458, 451, 447], [458, 450, 455, 450], [467, 451, 466, 450], [473, 469, 467, 462],
  [475, 469, 465, 465], [465, 457, 458, 455], [479, 461, 458, 455], [461, 445, 460, 442], [484, 457, 469, 457], [512, 464, 475, 464],
  [489, 480, 474, 465], [489, 483, 465, 465], [489, 467, 478, 467], [483, 478, 479, 467], [486, 469, 478, 468], [482, 476, 482, 476],
  [488, 482, 481, 475], [486, 480, 476, 474], [486, 480, 479, 474], [488, 479, 478, 472], [489, 478, 483, 478], [489, 488, 483, 481],
  [500, 483, 500, 477], [499, 499, 487, 485], [497, 489, 494, 488], [493, 493, 464, 464], [476, 466, 468, 463], [478, 464, 459, 458],
  [457, 457, 430, 430], [424, 424, 396, 396], [395, 384, 385, 378], [390, 378, 376, 376], [387, 380, 371, 365], [384, 356, 385, 356],
  [387, 385, 373, 369], [382, 376, 378, 371], [383, 378, 361, 361], [378, 359, 364, 359], [393, 361, 392, 361], [404, 393, 396, 385],
  [408, 405, 403, 397], [399, 393, 383, 383], [399, 386, 388, 384], [401, 394, 379, 375], [408, 385, 403, 385], [440, 405, 428, 404],
  [446, 430, 433, 427], [464, 438, 442, 433], [486, 476, 440, 438], [500, 447, 484, 447],
];

const dayX = (i) => 1167 + i * 6.23;
const dayY = (p) => 361 + (500 - p) * 0.786;
const dayVolume = { 35: 5, 36: 4, 37: 4, 41: 3, 45: 3, 50: 3, 53: 4, 55: 5, 56: 7, 57: 12 };

function DailyChart() {
  return (
    <svg viewBox="8 76 2497 562" className="block w-full bg-white text-[14px]" shapeRendering="crispEdges" role="img" aria-label="일봉 차트">
      <rect x="2424" y="76" width="81" height="562" fill="#d6e2f0" />
      <rect x="8" y="616" width="2416" height="22" fill="#d6e2f0" />
      <g stroke="#e2e2e2" strokeWidth="1.5">
        {[125, 164, 204, 243, 282, 322, 361, 400, 440, 479, 544, 613].map((y) => <path key={y} d={`M8 ${y}H2421`} />)}
        {[1227, 1358, 1483].map((x) => <path key={x} d={`M${x} 76V616`} />)}
      </g>
      <path d="M8 517.500H2505M8 616.500H2505M2424.500 76V638M8 637.500H2505M1358.500 616V638" stroke="#8c8c8c" />
      <path d="M8 462.500H2505" stroke="#ff0000" />

      {days.map(([high, open, close, low], i) => (
        <g key={i} fill={close >= open ? RED : "#145ad2"}>
          <rect x={dayX(i) - 0.5} y={dayY(high)} width="1" height={(high - low) * 0.786} />
          <rect x={dayX(i) - 2} y={dayY(Math.max(open, close))} width="4" height={Math.max(2, Math.abs(open - close) * 0.786)} />
          <rect x={dayX(i) - 2} y={614 - (dayVolume[i] || 2)} width="4" height={dayVolume[i] || 2} fill="#6c6c9e" />
        </g>
      ))}

      <g fill="none" shapeRendering="auto">
        <polyline stroke={GRAY} strokeWidth="2.500" points="1160,327 1180,326 1210,326 1267,327 1300,330 1347,333 1390,334 1427,342 1460,349 1493,354 1523,357" />
        <polyline stroke={GREEN} strokeWidth="2.500" points="1160,312 1180,312 1223,321 1228,326 1270,341 1300,345 1337,349 1390,358 1427,372 1460,388 1493,398 1523,402" />
        <polyline stroke={GOLD} strokeWidth="2.500" points="1160,323 1170,328 1193,343 1217,359 1243,374 1267,383 1293,387 1330,387 1360,380 1377,378 1393,380 1427,401 1470,428 1493,442 1507,444 1520,444 1523,441" />
        <polyline stroke={NAVY} points="1160,340 1180,356 1217,382 1260,393 1300,386 1327,378 1353,376 1373,373 1390,380 1407,403 1427,432 1450,456 1460,457 1487,453 1503,443 1523,425" />
        <polyline stroke={MAGENTA} points="1160,353 1180,370 1203,381 1223,397 1243,392 1267,390 1293,386 1317,380 1347,376 1370,369 1383,375 1397,400 1413,443 1427,458 1453,462 1473,447 1487,447 1500,443 1513,423 1523,403" />
        <path d="M1510 352L1524 354" stroke={MAGENTA} strokeWidth="4" />
      </g>

      <text x="1424" y="408" fill="#444">배당락(0,00%)</text>
      <path d="M1473 413V432" stroke="#ff0000" />
      <path d="M1466 429H1480L1473 437Z" fill="#ff0000" />
      <text x="1396" y="476" textAnchor="end" fill="#0000ff">최저 34,900 (06/17)</text>
      <path d="M1403 471.500H1414" stroke="#0000ff" />
      <path d="M1413 465L1421 471L1413 478Z" fill="#0000ff" />

      <g fill="#555">
        {[80, 75, 70, 65, 60, 55, 50, 45, 40, 35].map((p, i) => <text key={p} x="2433" y={130 + i * 39.3}>{p},000</text>)}
        <text x="2433" y="548">1,000K</text>
        <text x="2434" y="632">07/11</text>
        <text x="1360" y="632">06</text>
      </g>
      <g stroke="#8c8c8c">
        {[125, 164, 204, 243, 282, 322, 361, 400, 440, 479, 544].map((y) => <path key={y} d={`M2424 ${y}H2431`} />)}
        {Array.from({ length: 50 }, (_, i) => <path key={i} d={`M2424 ${109 + i * 7.86}H2427`} />)}
        {[558, 572, 586, 600].map((y) => <path key={y} d={`M2424 ${y}H2427`} />)}
      </g>
      <text x="2425" y="91" fill={RED}>LC:35,81</text>
      <text x="2425" y="106" fill="#1464d2">HC:-40,31</text>
      <PriceTag x={2429} y={373} fill={RED} color="#fff">48,350</PriceTag>
      <text x="2433" y="393" fill={RED}>10,14%</text>
      <rect x="2428.500" y="453.500" width="74" height="18" fill="#ffdc78" stroke="#444" />
      <text x="2442" y="468" fill="#222">37,087</text>
      <PriceTag x={2430} y={591} fill="#ff00ff" color="#fff">146,597</PriceTag>
      <text x="2434" y="611" fill="#ff00ff">187,49%</text>
      <rect x="2492.500" y="522.500" width="8" height="8" fill="#e8f0f8" stroke="#444" />
      <path d="M2495 526.500H2499" stroke="#444" strokeWidth="3" />
    </svg>
  );
}

/* ---------- strip under each chart ---------- */

const playIcons = [
  ["재생", "M7 3L12 8L7 13Z"],
  ["뒤로", "M8 3V13L3 8ZM13 3V13L8 8Z"],
  ["정지", "M4 4H12V12H4Z"],
  ["앞으로", "M3 3V13L8 8ZM8 3V13L13 8Z"],
];

const toolIcons = [
  ["창 추가", "M1 1H12V5M1 1V12H7M8 7H16V15H8ZM12 7V15M8 11H16"],
  ["창 복사", "M1 1H12V5M1 1V10H5M5 5H16V15H5ZM5 7H16"],
  ["구간", "M1 1H3M5 1H7M9 1H11M13 1H15M1 15H3M5 15H7M9 15H11M13 15H15M1 10L5 6L8 10L12 6L15 9"],
  ["십자선", "M1 5H16M7 1V16M9 7L15 13M9 7H13M9 7V11"],
  ["수평선", "M0 4H17M1 13L5 9L8 12L11 6L15 11"],
  ["수직선", "M5 1V16M1 12L5 10M7 12L11 5L13 9L16 7"],
  ["추세선", "M1 14L12 2M1 12L4 8L7 13L11 6L16 11"],
  ["지우개", "M1 9L7 2H13L7 9ZM1 9V13H7V9M7 13L13 6V2M10 15V11M13 15V10M16 15V11"],
  ["이미지", "M4 1H16V11M4 1V4M1 5H13V15H1ZM2 12L5 9L8 12L12 8"],
];

function ChartTools({ zoom, thumb }) {
  return (
    <div className="flex h-6 items-center bg-[#f0f0f0] text-[#8a8a8a]">
      <IconButton label="왼쪽으로" className="w-5">
        <svg viewBox="0 0 6 10" className="h-2"><path d="M6 0V10L0 5Z" fill="#222" /></svg>
      </IconButton>
      <div className="flex h-[22px] flex-1 bg-[#f8f8f8]">
        <div className={clsx("ml-auto border border-[#d0d0d0] bg-[#efefef]", thumb)} />
      </div>
      <div className="flex">
        {playIcons.map(([label, d]) => (
          <button key={label} aria-label={label} className="flex h-[21px] w-[21px] items-center justify-center border-2 border-[#8a8a8a] border-l-white border-t-white">
            <svg viewBox="0 0 16 16" className="w-4"><path d={d} fill="#000" /></svg>
          </button>
        ))}
      </div>
      <div className="ml-2 flex w-[88px] flex-col gap-1">
        <input
          type="range"
          aria-label="확대"
          defaultValue={zoom}
          className="block h-[3px] w-full appearance-none bg-[#8c8c8c] [&::-webkit-slider-thumb]:h-3 [&::-webkit-slider-thumb]:w-1 [&::-webkit-slider-thumb]:appearance-none [&::-webkit-slider-thumb]:bg-[#777]"
        />
        <svg viewBox="0 0 88 4" className="w-full">
          {Array.from({ length: 11 }, (_, i) => <rect key={i} x={2 + i * 8} width="1" height="4" fill="#222" />)}
        </svg>
      </div>
      <div className="ml-2 flex">
        {toolIcons.map(([label, d]) => (
          <button key={label} aria-label={label} className={clsx("flex h-5 w-[21px] items-center justify-center", label === "십자선" && "bg-white")}>
            <svg viewBox="0 0 17 17" className="w-[17px]"><path d={d} fill="none" stroke="currentColor" strokeWidth="1.4" /></svg>
          </button>
        ))}
        <button aria-label="돋보기" className="flex w-[21px] items-center justify-center"><Search size={17} /></button>
        {[
          ["축소", "M2 7H15V10H2Z"],
          ["확대", "M7 2H10V7H15V10H10V15H7V10H2V7H7Z"],
        ].map(([label, d]) => (
          <button key={label} aria-label={label} className="flex w-[22px] items-center justify-center">
            <svg viewBox="0 0 17 17" className="w-4"><path d={d} fill="#666" /></svg>
          </button>
        ))}
        <button className="w-5 font-bold text-[#555]">A</button>
      </div>
    </div>
  );
}

/* ---------- chart window toolbar ---------- */

function Segment({ active, className, children }) {
  return (
    <button className={clsx("-ml-px h-6 w-6 border border-[#9c9c9c]", active ? "bg-[#4a80c8] text-white" : className || "bg-[#efefef]")}>
      {children}
    </button>
  );
}

function MinuteToolbar() {
  return (
    <>
      <div className="flex h-[33px] items-center gap-[2px] overflow-hidden border-b border-[#a0a0a0] pl-[2px]">
        <IconButton label="목록" className="w-[25px]">
          <svg viewBox="0 0 18 18" className="w-[18px]">
            <path d="M5 2H16V16H5ZM5 6H16M10 6V16" fill="none" stroke="currentColor" strokeWidth="2" />
            <path d="M1 6L6 10L1 14Z" fill="#333" />
          </svg>
        </IconButton>
        <CodeBox />
        <Speaker />
        <div className="flex h-6">
          <CreditMark />
          <StockName className="w-[88px]" />
        </div>
        <span className="ml-1 mr-4 text-[14px] text-[#555]">※분봉 마크는 최근 2개월만 조회</span>
        <div className="flex">
          <Segment className="bg-[#f5cfca]">일</Segment>
          <Segment active>1</Segment>
          <IconButton label="일 단위" className="-ml-px w-[18px]"><Caret /></IconButton>
        </div>
        <div className="ml-1 flex">
          <Segment>주</Segment>
          <Segment>월</Segment>
          <Segment>년</Segment>
        </div>
        <div className="ml-[2px] flex">
          <Segment active>분</Segment>
          <Segment>초</Segment>
          <Segment>틱</Segment>
          <Combo label="주기" value="1" className="-ml-px w-12" />
        </div>
        <input aria-label="조회 개수" defaultValue="474" className="h-6 w-9 border border-[#8c8c8c] bg-white pr-[2px] text-right" />
        <span className="text-[#666]">/900</span>
        <div className="ml-3 flex">
          <IconButton label="종목 추가" className="w-6">
            <svg viewBox="0 0 18 18" className="w-[18px]">
              <path d="M3 1V12M8 1V10" stroke="currentColor" />
              <path d="M1 3H5V10H1ZM6 3H10V8H6ZM12 10H14V12H16V14H14V16H12V14H10V12H12Z" fill="currentColor" />
            </svg>
          </IconButton>
          <IconButton label="지표 추가" className="-ml-px w-6">
            <svg viewBox="0 0 18 18" className="w-[18px]">
              <path d="M1 9L5 3L9 7L13 2L17 5" fill="none" stroke="currentColor" />
              <path d="M11 10H13V12H15V14H13V16H11V14H9V12H11Z" fill="currentColor" />
            </svg>
          </IconButton>
          <IconButton label="저장" className="-ml-px w-6"><Save size={18} /></IconButton>
          <IconButton label="설정" className="-ml-px w-6"><Gear /></IconButton>
        </div>
        <label className="flex items-center gap-[2px]">
          <input type="checkbox" className="ml-[2px] size-[15px] appearance-none border border-[#8c8c8c] bg-white" />D
        </label>
        <div className="ml-1 flex">
          <input aria-label="기준일" defaultValue="07/11" className="h-6 w-12 border border-[#8c8c8c] bg-white px-1" />
          <IconButton label="달력" className="-ml-px w-[26px]">
            <svg viewBox="0 0 14 14" className="w-[14px]"><path d="M1 3H13V13H1ZM1 4H13M5 7H6M8 7H9M5 10H6M8 10H9M4 0V3M10 0V3" fill="none" stroke="currentColor" strokeWidth="1.6" /></svg>
          </IconButton>
        </div>
      </div>
      <div className="flex h-[34px] items-center gap-1 overflow-hidden pl-[2px]">
        <div className="flex h-6 w-[936px] shrink-0 items-center border border-[#8c8c8c] bg-[#f0f0f0] text-[#e8200c]">
          <div className="flex h-full w-[216px] items-center justify-end gap-1 border-r border-[#c4c4c4] pr-[2px]">
            48,350<Arrow up /><span className="ml-4">4,450</span><span className="ml-1">+10.14%</span>
          </div>
          <div className="flex h-full w-[213px] items-center justify-end border-r border-[#c4c4c4] pr-[2px]">
            <span className="mr-5 text-black">3,032,886</span>178.89%<span className="ml-3 text-black">2.94%</span>
          </div>
          <div className="flex h-full w-[102px] items-center justify-end border-r border-[#c4c4c4] pr-[2px] text-black">146,597백만</div>
          <div className="flex h-full w-[175px] items-center justify-between border-r border-[#c4c4c4] pl-[3px] pr-2">
            <span className="text-black">최우선</span>48,350<span>48,300</span>
          </div>
          <div className="flex flex-1 items-center justify-between pl-[2px] pr-2">
            <span className="text-black">시</span>44,900<span className="text-black">고</span>50,000<span className="text-black">저</span>44,400
          </div>
        </div>
        <button className="h-6 w-12 border border-[#9c9c9c] bg-[#f5cfca]">매수</button>
        <button className="h-6 w-12 border border-[#9c9c9c] bg-[#c6dcf2]">매도</button>
      </div>
    </>
  );
}

export default function App() {
  return (
    <div className="relative min-h-screen overflow-hidden bg-[#3b5794] pl-[5px] font-['Noto_Sans_Mono_CJK_KR','Noto_Sans_CJK_KR',monospace] text-[15px] leading-4 text-black">
      <div className="h-[7px] border-b border-[#7c7c7c] bg-[#e3e3e3]" />
      <main className="bg-[#9b9b9b] pr-[3px]">
        <section className="border-t-[5px] border-[#9b9fa3] bg-[#ececec] pl-[3px] pr-[5px]">
          <div className="h-16 bg-[#d0d0d0]" />
          <DailyChart />
          <ChartTools zoom={98} thumb="w-full" />
        </section>
        <div className="mt-[7px] h-[3px] bg-black" />
        <section className="bg-[#d0d0d0] pl-[5px] pr-[5px]">
          <div className="h-9" />
          <MinuteToolbar />
          <MinuteChart />
          <ChartTools zoom={55} thumb="w-7/12" />
        </section>
      </main>
      <InvestorWindow />
      <AfterHoursWindow />
      <OrderBookWindow />
      <ProgramWindow />
    </div>
  );
}
